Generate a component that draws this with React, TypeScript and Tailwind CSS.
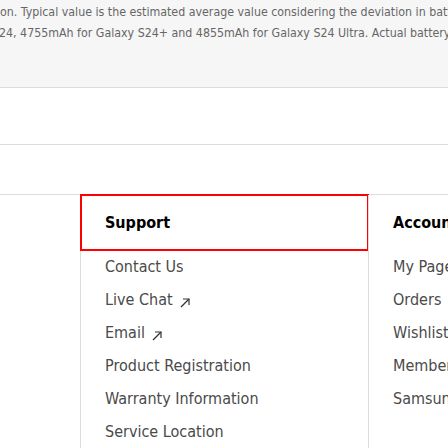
import React from "react";

const font = { fontFamily: '"Liberation Sans Narrow", "DejaVu Sans Condensed", "Liberation Sans", sans-serif' };

const ArrowIcon = () => (
  <svg width="10" height="10" viewBox="0 0 10 10" className="ml-[7px] mt-[6px] shrink-0" fill="none" stroke="#333" strokeWidth="1.2">
    <path d="M1 9L9 1" />
    <path d="M3 1H9V7" />
  </svg>
);

const support = [
  { label: "Contact Us" },
  { label: "Live Chat", ext: true },
  { label: "Email", ext: true },
  { label: "Product Registration" },
  { label: "Warranty Information" },
  { label: "Service Location" },
];

const account = ["My Page", "Orders", "Wishlist", "Memberships", "Samsung Rewards"];

export default function App() {
  return (
    <div className="w-[448px] h-[448px] overflow-hidden bg-white" style={font}>
      {/* Disclaimer */}
      <div className="h-[88px] bg-[#f6f6f6] border-b border-[#dcdcdc] overflow-hidden pt-[2px] text-[12.3px] leading-[21px] text-[#666] whitespace-nowrap">
        <p>on. Typical value is the estimated average value considering the deviation in battery capacity among the battery samples tested under IEC 61960 standard.</p>
        <p className="-ml-[1px]">24, 4755mAh for Galaxy S24+ and 4855mAh for Galaxy S24 Ultra. Actual battery life may vary depending on network environment, usage patterns and other factors.</p>
      </div>
      <div className="h-[57px] border-b border-[#dcdcdc]" />
      <div className="h-[50px] border-b border-[#dcdcdc]" />

      {/* Footer columns */}
      <div className="flex h-full">
        <div className="w-[80px] shrink-0" />
        <div className="w-[288px] shrink-0 border-l border-[#dcdcdc]">
          <div className="h-[55px] flex items-center pl-[24px] outline outline-2 -outline-offset-1 outline-[#f00] text-[16px] font-semibold text-black">
            Support
          </div>
          <ul>
            {support.map((s) => (
              <li key={s.label} className="h-[33px] flex items-center pl-[24px] text-[16px] text-[#4a4a4a]">
                <span>{s.label}</span>
                {s.ext && <ArrowIcon />}
              </li>
            ))}
          </ul>
        </div>
        <div className="flex-1 border-l border-[#dcdcdc] whitespace-nowrap">
          <div className="h-[55px] flex items-center pl-[24px] text-[16px] font-semibold text-black">
            Account
          </div>
          <ul>
            {account.map((a) => (
              <li key={a} className="h-[33px] flex items-center pl-[24px] text-[16px] text-[#4a4a4a]">
                {a}
              </li>
            ))}
          </ul>
        </div>
      </div>
    </div>
  );
}
